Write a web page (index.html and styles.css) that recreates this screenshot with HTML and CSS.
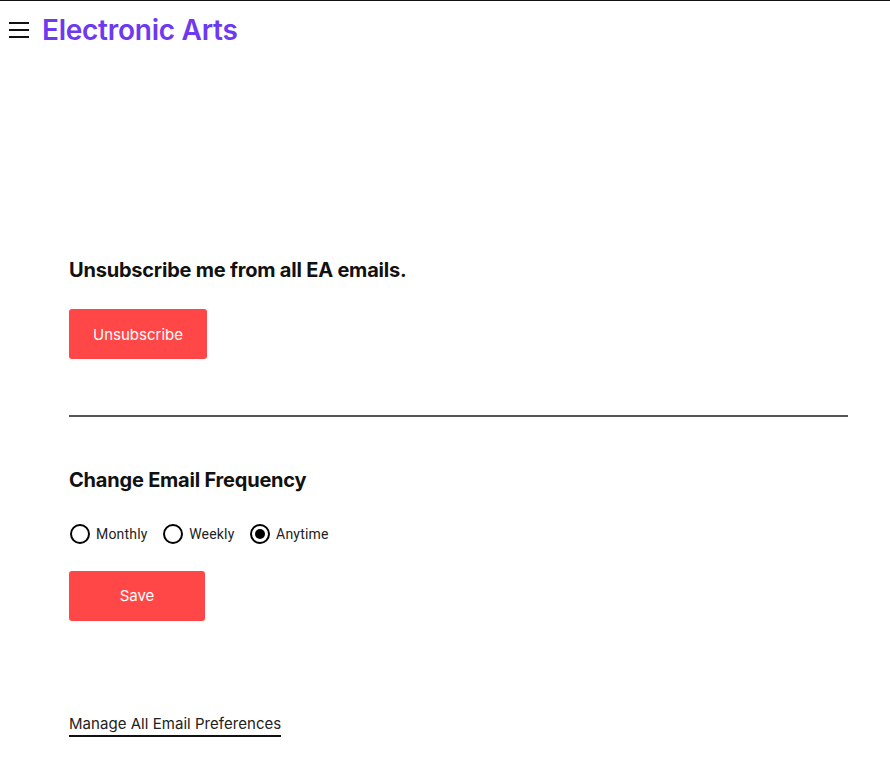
FILE: index.html
```html
<!DOCTYPE html>
<html lang="en">
<head>
    <meta charset="UTF-8">
    <meta name="viewport" content="width=device-width, initial-scale=1.0">
    <title>Email Preferences</title>
    <link rel="stylesheet" href="styles.css">
</head>
<body>
    <header class="topbar">
        <button class="menu-btn" aria-label="Menu">
            <span></span>
            <span></span>
            <span></span>
        </button>
        <a href="#" class="brand">Electronic Arts</a>
    </header>

    <main class="content">
        <section class="unsub">
            <h2>Unsubscribe me from all EA emails.</h2>
            <a href="#" class="btn btn-unsub">Unsubscribe</a>
        </section>

        <hr class="divider">

        <section class="frequency">
            <h2>Change Email Frequency</h2>
            <div class="radio-row">
                <label class="radio"><span class="dot"></span>Monthly</label>
                <label class="radio"><span class="dot"></span>Weekly</label>
                <label class="radio"><span class="dot checked"></span>Anytime</label>
            </div>
            <a href="#" class="btn btn-save">Save</a>
        </section>

        <a href="#" class="manage-link">Manage All Email Preferences</a>
    </main>
</body>
</html>
```

FILE: styles.css
```css
html, body {
    margin: 0;
    padding: 0;
}
body {
    font-family: Inter, "Liberation Sans", Arial, sans-serif;
    color: #111;
    background: #fff;
    border-top: 1px solid #111;
    height: 759px;
    overflow: hidden;
}
.topbar {
    display: flex;
    align-items: center;
    height: 59px;
    padding-left: 9px;
}
.menu-btn {
    display: flex;
    flex-direction: column;
    gap: 5px;
    width: 20px;
    padding: 0;
    margin: 0 13px 1px 0;
    border: 0;
    background: none;
}
.menu-btn span {
    display: block;
    height: 2px;
    background: #111;
}
.brand {
    margin-bottom: 2px;
    font-size: 28px;
    font-weight: 600;
    letter-spacing: -0.26px;
    color: #6e3af0;
    text-decoration: none;
}
.content {
    padding: 0 42px 0 69px;
}
h2 {
    margin: 0;
    font-size: 20px;
    line-height: 26px;
    font-weight: 700;
    letter-spacing: -0.21px;
    color: #111;
}
.unsub {
    padding-top: 197px;
}
.btn {
    display: flex;
    align-items: center;
    justify-content: center;
    height: 50px;
    background: #ff4747;
    border-radius: 3px;
    color: #fff;
    font-size: 15px;
    text-decoration: none;
}
.btn-unsub {
    width: 138px;
    margin-top: 26px;
}
.btn-save {
    box-sizing: border-box;
    width: 136px;
    margin-top: 25px;
    padding-bottom: 2px;
}
.divider {
    margin: 56px 0 0;
    border: 0;
    border-top: 2px solid #555;
}
.frequency {
    padding-top: 50px;
}
.radio-row {
    display: flex;
    gap: 15.5px;
    margin-top: 29px;
    padding-left: 1px;
}
.radio {
    display: flex;
    align-items: center;
    gap: 6px;
    height: 24px;
    font-family: Roboto, Arial, sans-serif;
    font-size: 14px;
    letter-spacing: 0.2px;
    color: #222;
}
.dot {
    position: relative;
    width: 20px;
    height: 20px;
    border: 2px solid #000;
    border-radius: 50%;
    box-sizing: border-box;
}
.dot.checked::after {
    content: "";
    position: absolute;
    top: 3px;
    left: 3px;
    width: 10px;
    height: 10px;
    border-radius: 50%;
    background: #000;
}
.manage-link {
    display: inline-block;
    margin-top: 92px;
    padding-top: 1px;
    padding-bottom: 1px;
    border-bottom: 2px solid #111;
    font-size: 15px;
    line-height: 20px;
    letter-spacing: 0.04px;
    color: #222;
    text-decoration: none;
}
```
